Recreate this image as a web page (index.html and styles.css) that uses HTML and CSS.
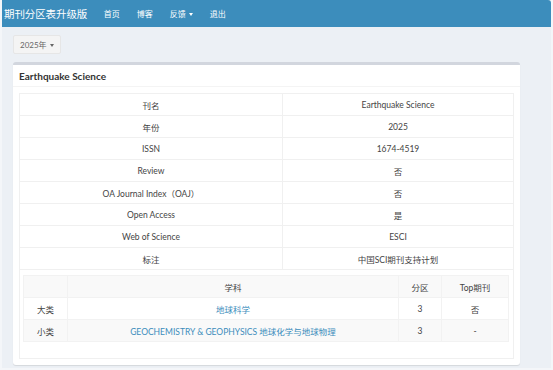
FILE: index.html
```html
<!doctype html>
<html lang="zh-CN">

<head>
  <meta charset="UTF-8">
  <title>期刊分区表升级版</title>
  <link rel="stylesheet" href="styles.css">
</head>

<body>
  <div class="page">
    <!-- Top bar -->
    <header class="navbar">
      <span class="brand">期刊分区表升级版</span>
      <nav class="nav">
        <a href="#">首页</a>
        <a href="#">博客</a>
        <a href="#">反馈 <span class="caret"></span></a>
        <a href="#">退出</a>
      </nav>
    </header>

    <main class="content">
      <button class="btn" type="button">2025年 <span class="caret"></span></button>

      <section class="box">
        <div class="box-header">
          <h3 class="box-title">Earthquake Science</h3>
        </div>
        <div class="box-body">
          <table class="info">
            <tr><td>刊名</td><td>Earthquake Science</td></tr>
            <tr><td>年份</td><td>2025</td></tr>
            <tr><td>ISSN</td><td>1674-4519</td></tr>
            <tr><td>Review</td><td>否</td></tr>
            <tr><td>OA Journal Index（OAJ）</td><td>否</td></tr>
            <tr><td>Open Access</td><td>是</td></tr>
            <tr><td>Web of Science</td><td>ESCI</td></tr>
            <tr><td>标注</td><td>中国SCI期刊支持计划</td></tr>
            <tr>
              <td class="nested" colspan="2">
                <table class="subjects">
                  <tr><td></td><td>学科</td><td>分区</td><td>Top期刊</td></tr>
                  <tr><td>大类</td><td><a href="#">地球科学</a></td><td>3</td><td>否</td></tr>
                  <tr><td>小类</td><td><a href="#">GEOCHEMISTRY &amp; GEOPHYSICS 地球化学与地球物理</a></td><td>3</td><td>-</td></tr>
                </table>
              </td>
            </tr>
          </table>
        </div>
      </section>
    </main>
  </div>
</body>

</html>
```

FILE: styles.css
```css
html,
body {
  margin: 0;
  height: 100%;
  background-color: #f4f6f9;
}

body {
  font-family: Lato, "Noto Sans CJK SC", sans-serif;
  font-size: 8.5px;
  color: #444;
}

a {
  color: #3c8dbc;
  text-decoration: none;
}

/* Outer frame of the window */
.page {
  width: 551px;
  height: 368px;
  background-color: #ecf0f5;
  border-left: 2px solid #f4f6f9;
  box-sizing: border-box;
  overflow: hidden;
}

/* Navbar */
.navbar {
  display: flex;
  align-items: center;
  height: 27px;
  margin-left: -2px;
  background-color: #3c8dbc;
  border-top-right-radius: 3px;
  color: #fff;
}

.brand {
  padding-left: 4px;
  font-size: 10.5px;
  letter-spacing: -0.1px;
}

.nav {
  display: flex;
  margin-left: 8px;
}

.nav a {
  padding: 0 8.5px;
  color: #fff;
  font-size: 8px;
}

.caret {
  display: inline-block;
  width: 0;
  height: 0;
  margin-left: 1px;
  vertical-align: middle;
  border-top: 3px solid;
  border-left: 2.5px solid transparent;
  border-right: 2.5px solid transparent;
}

/* Content */
.content {
  padding: 8px 31px 0 11px;
}

.btn {
  display: block;
  height: 19px;
  padding: 0 6px;
  font-family: inherit;
  font-size: 8px;
  color: #666;
  background-color: #f4f4f4;
  border: 1px solid #e6e6e6;
  border-radius: 2px;
}

.box {
  margin-top: 8px;
  background-color: #fff;
  border-top: 3px solid #d2d6de;
  border-radius: 3px;
  box-shadow: 0 1px 1px rgba(0, 0, 0, 0.1);
}

.box-header {
  height: 21px;
  display: flex;
  align-items: center;
  padding: 0 6px;
  border-bottom: 1px solid #f4f4f4;
}

.box-title {
  margin: 0;
  font-size: 10px;
  font-weight: 700;
  color: #333;
}

.box-body {
  padding: 6px 6px 6px;
}

/* Tables */
table {
  width: 100%;
  border-collapse: collapse;
  table-layout: fixed;
}

td {
  height: 21px;
  padding: 0;
  text-align: center;
  vertical-align: middle;
  border: 1px solid #f0f0f0;
}

.info td:first-child {
  width: 262px;
}

.info td.nested {
  height: auto;
  padding: 5px 4px 16px 3px;
  text-align: left;
}

.subjects tr:nth-child(odd) {
  background-color: #f9f9f9;
}

.subjects td {
  border-color: #f2f2f2;
}

.subjects td:nth-child(1) {
  width: 43px;
}

.subjects td:nth-child(3) {
  width: 42px;
}

.subjects td:nth-child(4) {
  width: 66px;
}
```
